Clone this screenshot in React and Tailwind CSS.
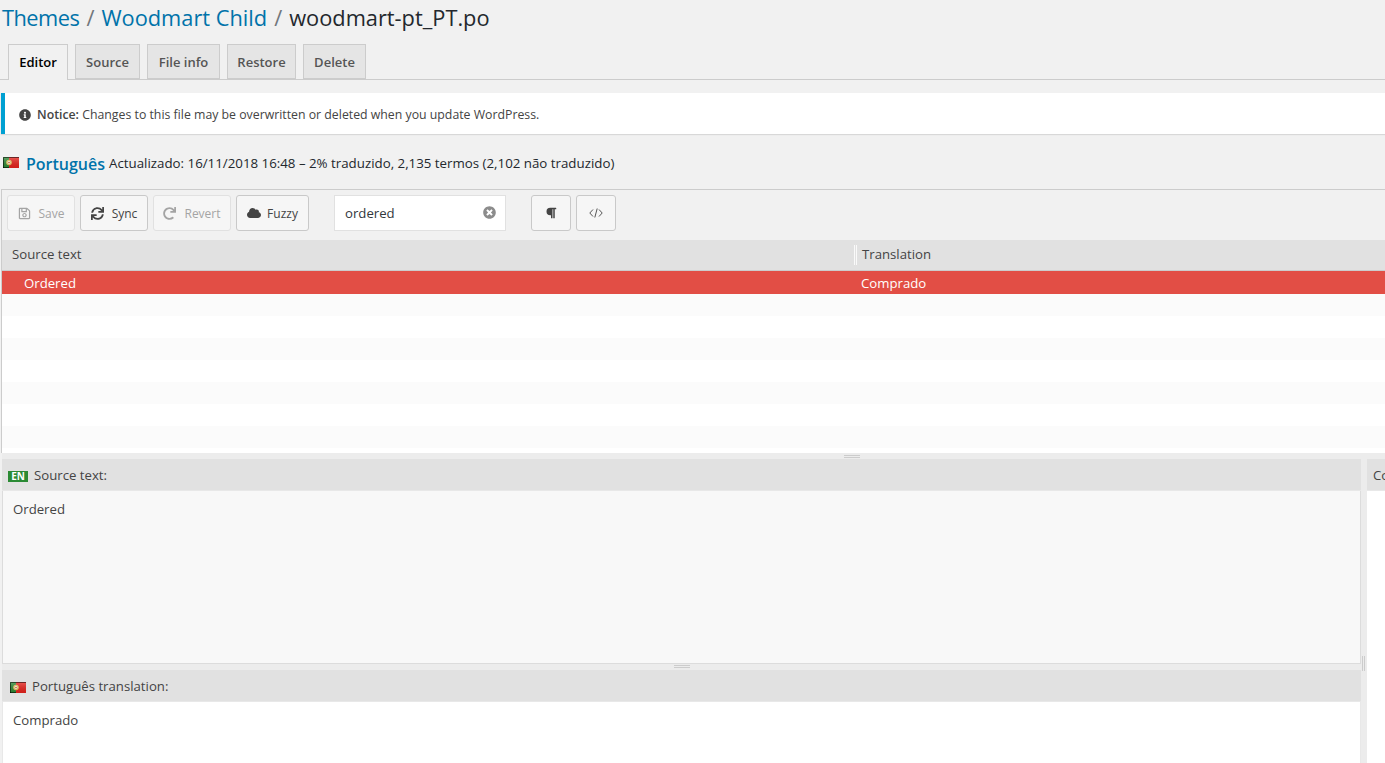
import React from "react";
import { FaRegSave, FaSync, FaRedo, FaCloud, FaParagraph, FaInfoCircle, FaTimesCircle } from "react-icons/fa";

const tabs = [
  { label: "Editor", w: "w-[60px]", active: true },
  { label: "Source", w: "w-[65px]" },
  { label: "File info", w: "w-[73px]" },
  { label: "Restore", w: "w-[69px]" },
  { label: "Delete", w: "w-[63px]" },
];

// Portuguese flag
const Flag = ({ className = "" }) => (
  <svg width="16" height="11" viewBox="0 0 16 11" className={`shrink-0 ${className}`}>
    <defs>
      <linearGradient id="sheen" x1="0" y1="0" x2="0" y2="1">
        <stop offset="0" stopColor="#fff" stopOpacity="0.25" />
        <stop offset="1" stopColor="#000" stopOpacity="0.1" />
      </linearGradient>
    </defs>
    <rect width="16" height="11" fill="#e8231c" />
    <rect width="6" height="11" fill="#2f8a35" />
    <circle cx="6" cy="5.5" r="2.8" fill="#f0c75e" />
    <circle cx="6" cy="5.5" r="1.4" fill="#fff" />
    <circle cx="6" cy="5.5" r="0.8" fill="#d9481c" />
    <rect width="16" height="11" fill="url(#sheen)" />
    <path d="M.5 11V.5H16M0 10.5h6" fill="none" stroke="#000" strokeOpacity="0.55" />
  </svg>
);

const ToolButton = ({ icon, label, disabled, w, gap = "gap-2" }) => (
  <div
    className={`h-9 ${w} flex items-center justify-center ${gap} rounded-[3px] border bg-[#f6f6f6] text-xs ${
      disabled ? "border-[#e1e1e1] text-[#a4a4a4]" : "border-[#c9c9c9] text-[#444]"
    }`}
  >
    {icon}
    {label && <span className="pt-px">{label}</span>}
  </div>
);

const PaneHeader = ({ children }) => (
  <div className="h-8 shrink-0 flex items-center pt-[3px] bg-[#e1e1e1] border-b border-[#e8e8e8] text-[13.2px] text-[#444]">
    {children}
  </div>
);

export default function App() {
  return (
    <div className="h-[763px] w-[1385px] overflow-hidden bg-[#f1f1f1] text-[#23282d] font-['Open_Sans','Noto_Sans',sans-serif]">
      <h1 className="h-11 pl-[2px] pt-[2px] text-[21.8px] leading-[32px] whitespace-nowrap">
        <span className="text-[#0073aa] tracking-[-0.5px]">Themes</span>
        <span className="text-[#72777c] mx-[7px]">/</span>
        <span className="text-[#0073aa]">Woodmart Child</span>
        <span className="text-[#72777c] mx-[7px]">/</span>
        woodmart-pt_PT.po
      </h1>

      <div className="h-9 flex gap-[7px] pl-2 border-b border-[#ccc]">
        {tabs.map((t) => (
          <div
            key={t.label}
            className={`${t.w} flex items-center justify-center border border-[#ccc] text-[13px] font-semibold ${
              t.active ? "h-9 border-b-0 bg-[#f1f1f1] text-black" : "h-[35px] pt-[2px] bg-[#e5e5e5] text-[#555]"
            }`}
          >
            {t.label}
          </div>
        ))}
      </div>

      <div className="mt-[13px] ml-px h-[41px] flex items-center gap-[6px] bg-white border-l-4 border-[#00a0d2] pl-[14px] text-[12.3px] text-[#444] shadow-[0_1px_1px_rgba(0,0,0,0.1)]">
        <FaInfoCircle className="text-[12px] text-[#444] mt-[2px]" />
        <p className="pt-[3px]">
          <strong className="font-semibold">Notice:</strong> Changes to this file may be overwritten or deleted when you update WordPress.
        </p>
      </div>

      <div className="h-[55px] flex items-center pl-[3px] pt-[5px]">
        <Flag className="mb-[4px]" />
        <span className="ml-[7px] text-base font-semibold text-[#0073aa]">Português</span>
        <span className="ml-[4px] text-[13.3px] text-[#23282d]">
          Actualizado: 16/11/2018 16:48 – 2% traduzido, 2,135 termos (2,102 não traduzido)
        </span>
      </div>

      <div className="ml-px border-l border-t border-[#ccc]">
        <div className="h-[50px] flex items-start pt-[5px] pl-[5px]">
          <div className="flex gap-[5px]">
            <ToolButton w="w-[68px]" disabled label="Save" icon={<FaRegSave className="text-[13px]" />} />
            <ToolButton w="w-[68px]" label="Sync" icon={<FaSync className="text-[13px]" />} />
            <ToolButton w="w-[78px]" disabled label="Revert" icon={<FaRedo className="text-[13px]" />} />
            <ToolButton w="w-[73px]" gap="gap-[6px]" label="Fuzzy" icon={<FaCloud className="text-[14px]" />} />
          </div>
          <div className="ml-[25px] h-9 w-[172px] flex items-center justify-between bg-white border border-[#e1e1e1] pl-[10px] pr-[9px] text-[13.2px] text-[#32373c]">
            <span className="pt-px">ordered</span>
            <FaTimesCircle className="text-[13px] text-[#8c8c8c] -mt-[2px]" />
          </div>
          <div className="ml-[25px] flex gap-[5px]">
            <ToolButton w="w-10" icon={<FaParagraph className="text-[12px] text-[#444]" />} />
            <ToolButton
              w="w-10"
              icon={
                <svg width="14" height="10" viewBox="0 0 14 10" fill="none" stroke="#555" strokeWidth="1">
                  <path d="M4 1.5 0.8 5 4 8.5M10 1.5 13.2 5 10 8.5M8.2 .5 5.8 9.5" />
                </svg>
              }
            />
          </div>
        </div>

        <div className="h-[31px] flex items-center bg-[#e1e1e1] border-b border-[#ccc] text-[13.2px] text-[#444]">
          <div className="w-[855px] pl-[10px] border-r-[3px] border-double border-[#fafafa]">Source text</div>
          <div className="pl-[5px]">Translation</div>
        </div>
        <div className="h-[23px] flex items-center pt-[3px] bg-[#e24e45] text-[13.2px] text-white">
          <div className="w-[859px] pl-[22px]">Ordered</div>
          <div>Comprado</div>
        </div>
        <div className="h-[159px] bg-white">
          {[0, 1, 2, 3, 4, 5, 6].map((i) => (
            <div key={i} className={`h-[22px] ${i % 2 ? "bg-white" : "bg-[#fbfbfb]"}`} />
          ))}
        </div>
      </div>

      <div className="relative h-[6px] ml-[2px] bg-[#ececec]">
        <div className="absolute left-[842px] top-[2px] h-[3px] w-4 border-y border-[#ccc]" />
      </div>

      <div className="flex h-[304px] ml-[2px]">
        <div className="w-[1359px] shrink-0 flex flex-col">
          <PaneHeader>
            <span className="ml-[6px] mr-[6px] h-[11px] w-5 flex items-center justify-center bg-[#2b8a34] text-[10px] font-bold text-white">EN</span>
            Source text:
          </PaneHeader>
          <div className="h-[173px] border border-t-0 border-[#dcdcdc] bg-[#f8f8f8] pl-[10px] pt-[8px] text-[13.2px] leading-[20px] text-[#444]">
            Ordered
          </div>
          <div className="relative h-[6px] bg-[#ececec]">
            <div className="absolute left-[672px] top-[1px] h-[3px] w-4 border-y border-[#ccc]" />
          </div>
          <PaneHeader>
            <span className="ml-2 mr-[6px] flex">
              <Flag />
            </span>
            Português translation:
          </PaneHeader>
          <div className="flex-1 bg-white border-x border-[#e8e8e8] pl-[10px] pt-[8px] text-[13.2px] leading-[20px] text-[#444]">
            Comprado
          </div>
        </div>
        <div className="relative w-[6px] shrink-0 bg-[#ececec]">
          <div className="absolute left-[1px] top-[197px] h-[15px] w-[3px] border-x border-[#ccc]" />
        </div>
        <div className="flex-1 flex flex-col overflow-hidden">
          <PaneHeader>
            <span className="ml-[6px] whitespace-nowrap">Comments</span>
          </PaneHeader>
          <div className="flex-1 bg-white" />
        </div>
      </div>
    </div>
  );
}
